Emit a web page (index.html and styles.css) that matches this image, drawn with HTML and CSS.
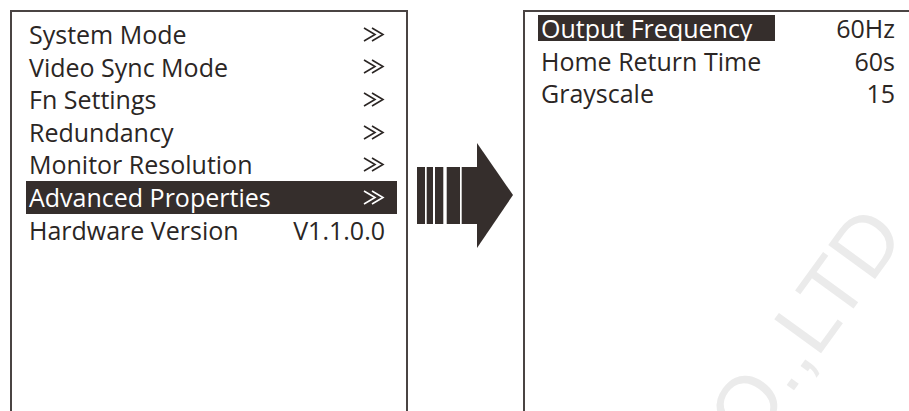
FILE: index.html
```html
<!DOCTYPE html>
<html lang="en">
<head>
  <meta charset="UTF-8" />
  <meta name="viewport" content="width=device-width, initial-scale=1.0" />
  <title>Advanced Properties Menu</title>
  <link rel="stylesheet" href="styles.css">
</head>
<body>
  <div class="watermark">CO.,LTD</div>

  <div class="stage">
    <div class="panel panel-left">
      <div class="row"><span>System Mode</span><svg class="chev" viewBox="0 0 22 15"><polyline points="1,1 12,7.5 1,14" /><polyline points="9,1 20,7.5 9,14" /></svg></div>
      <div class="row"><span>Video Sync Mode</span><svg class="chev" viewBox="0 0 22 15"><polyline points="1,1 12,7.5 1,14" /><polyline points="9,1 20,7.5 9,14" /></svg></div>
      <div class="row"><span>Fn Settings</span><svg class="chev" viewBox="0 0 22 15"><polyline points="1,1 12,7.5 1,14" /><polyline points="9,1 20,7.5 9,14" /></svg></div>
      <div class="row"><span>Redundancy</span><svg class="chev" viewBox="0 0 22 15"><polyline points="1,1 12,7.5 1,14" /><polyline points="9,1 20,7.5 9,14" /></svg></div>
      <div class="row"><span>Monitor Resolution</span><svg class="chev" viewBox="0 0 22 15"><polyline points="1,1 12,7.5 1,14" /><polyline points="9,1 20,7.5 9,14" /></svg></div>
      <div class="row selected"><span>Advanced Properties</span><svg class="chev" viewBox="0 0 22 15"><polyline points="1,1 12,7.5 1,14" /><polyline points="9,1 20,7.5 9,14" /></svg></div>
      <div class="row"><span>Hardware Version</span><span class="value">V1.1.0.0</span></div>
    </div>

    <svg class="arrow" viewBox="0 0 96 105">
      <rect x="0" y="24" width="8" height="57" />
      <rect x="9.7" y="24" width="6.3" height="57" />
      <rect x="18" y="24" width="8.3" height="57" />
      <rect x="29.7" y="24" width="13.3" height="57" />
      <rect x="44.7" y="24" width="16" height="57" />
      <polygon points="60,0 96,52 60,105" />
    </svg>

    <div class="panel panel-right">
      <div class="row"><span class="mark">Output Frequency</span><span class="value">60Hz</span></div>
      <div class="row"><span>Home Return Time</span><span class="value">60s</span></div>
      <div class="row"><span>Grayscale</span><span class="value">15</span></div>
    </div>
  </div>
</body>
</html>
```

FILE: styles.css
```css
html, body {
  margin: 0;
  height: 100%;
  overflow: hidden;
  background: #fff;
}
body {
  font-family: "Open Sans", "Noto Sans", sans-serif;
  color: #2b2624;
  position: relative;
}
.stage {
  display: flex;
  align-items: flex-start;
  padding: 10px 0 0 10px;
  position: relative;
}
.panel {
  border: 2px solid #4a4443;
  border-bottom: none;
  height: 420px;
  box-sizing: border-box;
}
.panel-left {
  width: 398px;
  flex: none;
  padding: 6px 9px 0 14px;
}
.row {
  display: flex;
  justify-content: space-between;
  align-items: center;
  height: 32.6px;
  line-height: 32.6px;
  font-size: 25px;
  padding: 0 12px 0 3px;
}
.selected {
  background: #352e2c;
  color: #fff;
}
.chev {
  width: 22px;
  height: 15px;
  fill: none;
  stroke: currentColor;
  stroke-width: 1.6;
}
.arrow {
  flex: none;
  width: 96px;
  height: 105px;
  margin: 133px 10px 0 9px;
  fill: #352e2c;
}
.panel-right {
  width: 400px;
  flex: none;
  padding: 0 26px 0 16px;
}
.panel-right .row {
  align-items: baseline;
  padding: 0;
}
.mark {
  background: #352e2c;
  color: #fff;
  line-height: 26px;
  padding: 0 23px 0 3px;
  margin-left: -3px;
}
.value {
  text-align: right;
}
.watermark {
  position: absolute;
  left: 726px;
  top: 422px;
  font-family: "Liberation Sans", sans-serif;
  font-size: 84px;
  line-height: 1;
  color: #ebebeb;
  transform: rotate(-54deg);
  transform-origin: left bottom;
  white-space: nowrap;
}
```
